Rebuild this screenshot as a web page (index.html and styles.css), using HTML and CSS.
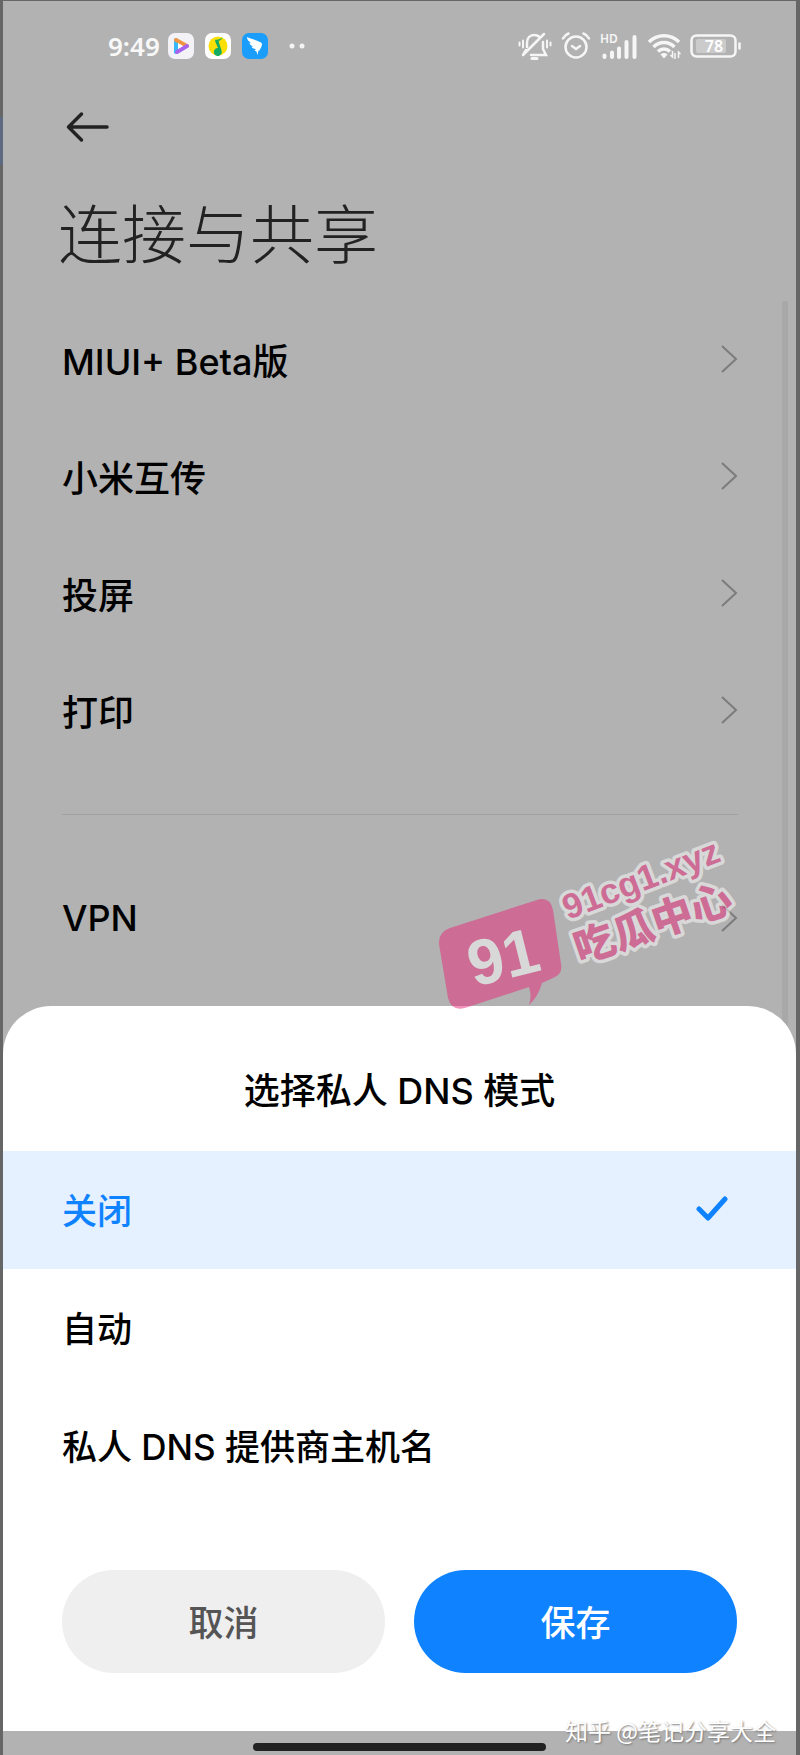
FILE: index.html
```html
<!DOCTYPE html>
<html lang="zh-CN">
<head>
  <meta charset="UTF-8">
  <meta name="viewport" content="width=device-width, initial-scale=1">
  <title>连接与共享</title>
  <link rel="stylesheet" href="styles.css">
</head>
<body>
  <div class="phone">
    <!-- 状态栏 -->
    <div class="status-bar">
      <div class="status-left">
        <span class="time">9:49</span>
        <svg class="app-icon" viewBox="0 0 26 26">
          <rect width="26" height="26" rx="7" fill="#f3f2f6"/>
          <path d="M8 7v12" stroke="#35b8f5" stroke-width="4" stroke-linecap="round"/>
          <path d="M8 7l11 6" stroke="#f39443" stroke-width="4" stroke-linecap="round"/>
          <path d="M19 13L9 19" stroke="#a765ee" stroke-width="4" stroke-linecap="round"/>
          <path d="M10 10l5 3-5 3z" fill="#fff"/>
        </svg>
        <svg class="app-icon" viewBox="0 0 26 26">
          <rect width="26" height="26" rx="7" fill="#fff"/>
          <circle cx="13" cy="13" r="9.500" fill="#fbdf05"/>
          <path d="M10.500 6.500c2 1 5-1 7-2-1 2-2 3-4 3.500l3 9.500a4 4 0 1 1-3.500-2.500l-3-7z" fill="#13ac62"/>
        </svg>
        <svg class="app-icon" viewBox="0 0 26 26">
          <rect width="26" height="26" rx="7" fill="#1a9dfb"/>
          <path d="M5 4c5 2.500 10 3 14 5.500 1.500 1 1 2.500.5 4l-2 4h-1l-1 4.500-1-3.500-2-1 1.500-1.500c-3 0-4-1-4.500-2.500h2C9 12.500 7.500 11.500 7.500 9.500l2 .5C6.500 8.500 5 7 5 4z" fill="#fff"/>
        </svg>
        <svg class="more-dots" viewBox="0 0 16 6">
          <circle cx="3" cy="3" r="2.500" fill="#f4f4f4"/>
          <circle cx="13" cy="3" r="2.500" fill="#f4f4f4"/>
        </svg>
      </div>
      <div class="status-right">
        <!-- 静音 -->
        <svg width="34" height="28" viewBox="0 0 34 28" fill="none" stroke="#f6f6f6" stroke-width="2.500" stroke-linecap="round">
          <path d="M9 15v-4c0-5 3-8 7-8 2 0 4 .5 5.500 2M25 10v7l3 6H13M5 23l3-5M5 23L26 2"/>
          <path d="M14 26.500h5" stroke-width="3"/>
          <path d="M1.500 10.500v3M5 8.500v7M29 8.500v7M32.500 10.500v3" stroke-width="2"/>
        </svg>
        <!-- 闹钟 -->
        <svg width="30" height="28" viewBox="0 0 30 28" fill="none" stroke="#f6f6f6" stroke-width="2.500" stroke-linecap="round" stroke-linejoin="round">
          <circle cx="15" cy="15" r="10.500"/>
          <path d="M11 14l4 3 4-3M2 6.500c1-2 3-4 5.500-5M28 6.500c-1-2-3-4-5.500-5"/>
        </svg>
        <!-- 信号 -->
        <svg class="signal" width="38" height="28" viewBox="0 0 38 28">
          <text class="hd" x="0" y="11">HD</text>
          <path d="M4.500 25v-1.500M12 25v-4.500M19 25v-8.500M26.500 25V10M34.500 25V5" stroke="#f6f6f6" stroke-width="4" stroke-linecap="round"/>
        </svg>
        <!-- WiFi -->
        <svg width="34" height="28" viewBox="0 0 34 28" fill="none" stroke="#f6f6f6" stroke-width="3.500">
          <path d="M2 10c8-8.500 22-8.500 30 0M6.500 15c6-6 15-6 21 0M11 19.500c3.500-3.500 8.500-3.500 12 0"/>
          <path d="M13.500 22.500c2-2 5-2 7 0L17 26.500z" fill="#f6f6f6" stroke="none"/>
          <path d="M25.500 19v6l-2-2M28 27v-6M31.500 26v-6l2 2" stroke-width="1.500"/>
        </svg>
        <!-- 电池 -->
        <svg width="52" height="28" viewBox="0 0 52 28">
          <rect x="6" y="7" width="30" height="14" rx="2" fill="#cbcbcb"/>
          <rect x="1.500" y="3.500" width="44" height="21" rx="5" fill="none" stroke="#f6f6f6" stroke-width="2.500"/>
          <path d="M49.500 11.500v5" stroke="#f6f6f6" stroke-width="2.500" stroke-linecap="round"/>
          <text class="battery-text" x="24" y="20">78</text>
        </svg>
      </div>
    </div>

    <div class="toolbar">
      <button class="back" type="button" aria-label="返回">
        <svg width="44" height="32" viewBox="0 0 44 32" fill="none" stroke="#222" stroke-width="3.500" stroke-linecap="round" stroke-linejoin="round">
          <path d="M41 16H3M15.500 3L2.500 16l13 13"/>
        </svg>
      </button>
    </div>

    <h1 class="page-title">连接与共享</h1>

    <!-- 设置列表 -->
    <nav class="settings">
      <a class="row" href="#">MIUI+ Beta版<svg class="chevron" viewBox="0 0 18 28"><path d="M2 1l14 13L2 27"/></svg></a>
      <a class="row" href="#">小米互传<svg class="chevron" viewBox="0 0 18 28"><path d="M2 1l14 13L2 27"/></svg></a>
      <a class="row" href="#">投屏<svg class="chevron" viewBox="0 0 18 28"><path d="M2 1l14 13L2 27"/></svg></a>
      <a class="row" href="#">打印<svg class="chevron" viewBox="0 0 18 28"><path d="M2 1l14 13L2 27"/></svg></a>
      <hr class="divider">
      <a class="row" href="#">VPN<svg class="chevron" viewBox="0 0 18 28"><path d="M2 1l14 13L2 27"/></svg></a>
    </nav>
    <div class="scrollbar"></div>
    <div class="edge-mark"></div>

    <!-- 私人 DNS 弹窗 -->
    <form class="sheet">
      <h2 class="sheet-title">选择私人 DNS 模式</h2>
      <label class="option">
        <input type="radio" name="dns" value="off" checked>
        <span>关闭</span>
        <svg class="check" viewBox="0 0 32 26"><path d="M3 13l9 9L29 3"/></svg>
      </label>
      <label class="option">
        <input type="radio" name="dns" value="auto">
        <span>自动</span>
        <svg class="check" viewBox="0 0 32 26"><path d="M3 13l9 9L29 3"/></svg>
      </label>
      <label class="option">
        <input type="radio" name="dns" value="host">
        <span>私人 DNS 提供商主机名</span>
        <svg class="check" viewBox="0 0 32 26"><path d="M3 13l9 9L29 3"/></svg>
      </label>
      <div class="actions">
        <button class="btn btn-cancel" type="button">取消</button>
        <button class="btn btn-save" type="button">保存</button>
      </div>
    </form>

    <div class="nav-area"><div class="home-bar"></div></div>

    <!-- 水印 -->
    <svg class="stamp" viewBox="0 0 340 200">
      <path fill="#e82878" d="M30 108L117 80Q130 76 133 90L141 144Q143 154 133 158L122 163Q118 177 109 185Q112 176 109 167L48 187Q32 193 28 178L19 124Q18 112 30 108z"/>
      <text class="stamp-num" transform="translate(54 167) rotate(-14)">91</text>
      <text class="stamp-url" transform="translate(148 100) rotate(-21)">91cg1.xyz</text>
      <text class="stamp-name" transform="translate(160 144) rotate(-19)">吃瓜中心</text>
    </svg>
    <div class="credit">知乎 @笔记分享大全</div>
  </div>
</body>
</html>
```

FILE: styles.css
```css
* {
  box-sizing: border-box;
}
body {
  margin: 0;
  background-color: #b2b2b2;
  color: #000;
  font-family: Inter, "Noto Sans CJK SC", sans-serif;
}
.phone {
  position: relative;
  border: solid #666;
  border-width: 1px 4px 0 3px;
}

/* 状态栏 */
.status-bar {
  display: flex;
  justify-content: space-between;
  align-items: center;
  height: 90px;
  padding: 0 54px 0 105px;
}
.status-left,
.status-right {
  display: flex;
  align-items: center;
}
.status-left {
  gap: 11px;
}
.status-right {
  gap: 9px;
}
.time {
  margin-right: -3px;
  color: #f8f8f8;
  font: 600 26px/32px "Noto Sans", sans-serif;
}
.app-icon {
  width: 26px;
  height: 26px;
}
.more-dots {
  width: 16px;
  margin-left: 10px;
}
.signal {
  overflow: visible;
}
.hd {
  fill: #f6f6f6;
  font: 600 12px "Noto Sans", sans-serif;
}
.battery-text {
  fill: #fff;
  font: 600 16px "Noto Sans", sans-serif;
  text-anchor: middle;
}

/* 标题 */
.toolbar {
  display: flex;
  align-items: center;
  height: 72px;
  padding: 0 63px;
}
.back {
  display: flex;
  padding: 0;
  border: none;
  background: none;
  cursor: pointer;
}
.page-title {
  margin: 27px 55px 31px;
  color: #222;
  font-family: "Noto Sans CJK SC", sans-serif;
  font-size: 64px;
  font-weight: 300;
  line-height: 80px;
}

/* 列表 */
.settings {
  padding: 0 58px 29px 59px;
}
.row {
  display: flex;
  justify-content: space-between;
  align-items: center;
  height: 117px;
  padding-bottom: 2px;
  color: #000;
  font-size: 36px;
  font-weight: 500;
  text-decoration: none;
}
.chevron {
  width: 18px;
  height: 28px;
  fill: none;
  stroke: #7c7c7c;
  stroke-width: 2;
}
.divider {
  height: 1px;
  margin: 45px 0;
  border: none;
  background-color: #a0a0a0;
}
.scrollbar {
  position: absolute;
  top: 300px;
  right: 8px;
  width: 6px;
  height: 740px;
  border-radius: 3px;
  background-color: #a8a8a8;
}
.edge-mark {
  position: absolute;
  top: 116px;
  left: -3px;
  width: 3px;
  height: 48px;
  background-color: #5c6980;
}

/* 弹窗 */
.sheet {
  position: relative;
  padding-bottom: 58px;
  border-radius: 48px 48px 0 0;
  background-color: #fff;
}
.sheet-title {
  margin: 0;
  padding: 57px 0 32px;
  font-size: 36px;
  font-weight: 500;
  line-height: 56px;
  text-align: center;
}
.option {
  display: flex;
  align-items: center;
  height: 118px;
  padding: 0 68px 3px 59px;
  font-size: 35px;
  font-weight: 500;
  cursor: pointer;
}
.option input {
  appearance: none;
  width: 0;
  margin: 0;
}
.option:has(input:checked) {
  background-color: #e5f1fe;
  color: #0f82ff;
}
.check {
  display: none;
  width: 32px;
  margin-left: auto;
  fill: none;
  stroke: #0f82ff;
  stroke-width: 5;
  stroke-linecap: round;
  stroke-linejoin: round;
}
input:checked ~ .check {
  display: block;
}
.actions {
  display: flex;
  gap: 29px;
  padding: 65px 59px 0;
}
.btn {
  flex: 1;
  height: 103px;
  padding: 0 0 2px;
  border: none;
  border-radius: 52px;
  font: 500 35px "Noto Sans CJK SC", sans-serif;
  cursor: pointer;
}
.btn-cancel {
  background-color: #efefef;
  color: #555;
}
.btn-save {
  background-color: #0f82ff;
  color: #fff;
}
.nav-area {
  display: flex;
  justify-content: center;
  height: 24px;
  padding-top: 12px;
}
.home-bar {
  width: 37%;
  height: 8px;
  border-radius: 4px;
  background-color: #222;
}

/* 水印 */
.stamp {
  position: absolute;
  top: 819px;
  right: 36px;
  width: 340px;
  opacity: 0.5;
  pointer-events: none;
}
.stamp-num {
  fill: #fff;
  font: 700 64px "Liberation Sans", sans-serif;
}
.stamp-url,
.stamp-name {
  fill: #e82878;
  stroke: #fff;
  stroke-width: 7;
  stroke-linejoin: round;
  paint-order: stroke;
}
.stamp-url {
  font: 700 35px "Liberation Sans", sans-serif;
}
.stamp-name {
  font: 900 41px "Noto Sans CJK SC", sans-serif;
}
.credit {
  position: absolute;
  right: 20px;
  bottom: 9px;
  color: #fff;
  font-family: "Noto Sans CJK SC", sans-serif;
  font-size: 23px;
  line-height: 32px;
  text-shadow: 1px 1px 2px #777;
}
```
